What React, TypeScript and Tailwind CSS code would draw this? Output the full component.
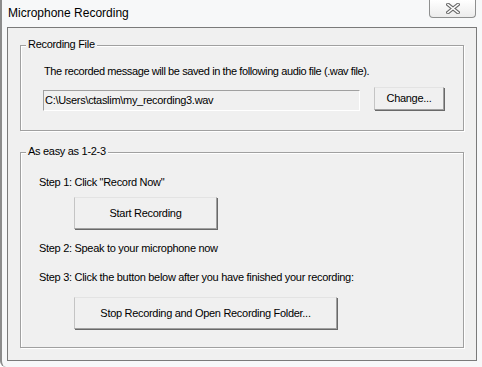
import React from 'react';

const font = { fontFamily: '"Liberation Sans", Arial, sans-serif' };

const CloseGlyph: React.FC = () => (
  <svg width="14" height="11" viewBox="0 0 14 11">
    <path d="M2 1.5 L12 9.5 M12 1.5 L2 9.5" stroke="#6b6b6b" strokeWidth="3.6" strokeLinecap="square" />
    <path d="M2 1.5 L12 9.5 M12 1.5 L2 9.5" stroke="#ffffff" strokeWidth="1.6" strokeLinecap="square" />
  </svg>
);

const GroupBox: React.FC<{ title: string; className?: string; children: React.ReactNode }> = ({ title, className = '', children }) => (
  <div className={`relative border border-[#a0a0a0] shadow-[1px_1px_0_#ffffff,inset_1px_1px_0_#ffffff] ${className}`}>
    <span className="absolute -top-[8px] left-[5px] bg-[#f0f0f0] px-[2px] text-[11px] leading-[13px] tracking-[-0.3px] text-black">
      {title}
    </span>
    {children}
  </div>
);

const PushButton: React.FC<{ label: string; className?: string }> = ({ label, className = '' }) => (
  <button
    className={`flex items-center justify-center bg-[#f0f0f0] border-t border-l border-t-[#e3e3e3] border-l-[#c4c4c4] border-r border-b border-r-[#a0a0a0] border-b-[#a0a0a0] shadow-[1px_1px_0_#696969] text-[11px] leading-[13px] tracking-[-0.3px] text-black ${className}`}
  >
    {label}
  </button>
);

export default function App() {
  return (
    <div className="w-[482px] h-[367px] bg-[#f7f8f9] border-l-2 border-l-[#8c8c8c] rounded-bl-[6px] overflow-hidden" style={font}>
      {/* title bar */}
      <div className="relative h-[27px] flex items-start">
        <span className="ml-[6px] mt-[6px] text-[12px] leading-[14px] text-black">Microphone Recording</span>
        <div className="absolute left-[427px] top-0 w-[47px] h-[18px] rounded-b-[4px] border border-t-0 border-[#8e8f8f] bg-gradient-to-b from-[#ffffff] to-[#ececec] flex items-center justify-center">
          <CloseGlyph />
        </div>
      </div>

      {/* client area */}
      <div className="ml-[5px] w-[470px] h-[334px] border border-[#7a7a7a] bg-[#f0f0f0] pt-[17px] pl-[12px] tracking-[-0.3px]">
        <GroupBox title="Recording File" className="w-[444px] h-[86px]">
          <div className="pt-[19px] pl-[23px] text-[11px] leading-[13px] tracking-[-0.4px] text-black">
            The recorded message will be saved in the following audio file (.wav file).
          </div>
          <div className="flex items-start mt-[9px] pl-[22px]">
            <div className="mt-[3px] w-[317px] h-[21px] border border-t-[#a0a0a0] border-l-[#a0a0a0] border-r-white border-b-white bg-[#f0f0f0] flex items-center pl-[1px] text-[11px] leading-[13px] tracking-[-0.3px] text-black">
              C:\Users\ctaslim\my_recording3.wav
            </div>
            <PushButton label="Change..." className="ml-[14px] w-[70px] h-[23px]" />
          </div>
        </GroupBox>

        <GroupBox title="As easy as 1-2-3" className="mt-[21px] w-[444px] h-[196px]">
          <div className="flex flex-col items-start pl-[18px] pt-[23px] text-[11px] leading-[13px] tracking-[-0.3px] text-black">
            <span>Step 1: Click "Record Now"</span>
            <PushButton label="Start Recording" className="mt-[8px] ml-[35px] w-[143px] h-[32px]" />
            <span className="mt-[13px]">Step 2: Speak to your microphone now</span>
            <span className="mt-[16px]">Step 3: Click the button below after you have finished your recording:</span>
            <PushButton label="Stop Recording and Open Recording Folder..." className="mt-[13px] ml-[35px] w-[263px] h-[32px]" />
          </div>
        </GroupBox>
      </div>
    </div>
  );
}
